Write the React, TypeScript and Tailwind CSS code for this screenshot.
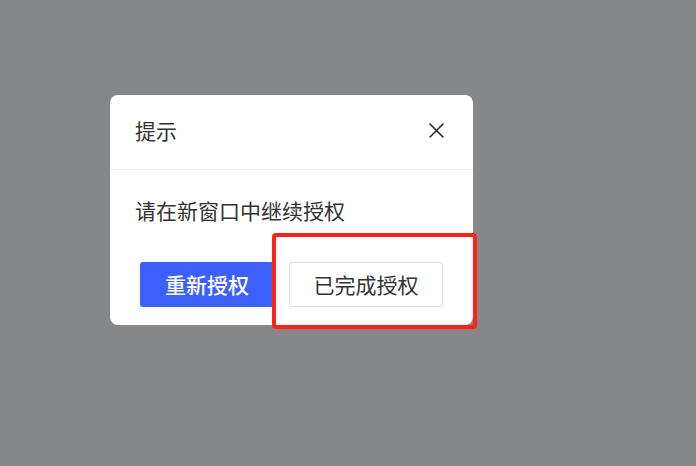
import React from 'react';

const font = { fontFamily: '"Noto Sans CJK SC", "Noto Sans", sans-serif' };

const App: React.FC = () => {
  return (
    <div className="relative w-[696px] h-[466px] bg-[#868789] pl-[110px] pt-[95px]" style={font}>
      <div className="w-[363px] h-[230px] rounded-lg bg-white flex flex-col">
        {/* Header */}
        <div className="h-[75px] shrink-0 px-[25px] flex items-center justify-between border-b border-[#eeeeee]">
          <span className="text-[21px] leading-none text-[#333333] -mt-[3px]">提示</span>
          <button className="w-[20px] h-[20px] flex items-center justify-center mr-[2px] -mt-[3px]" aria-label="关闭">
            <svg width="15" height="15" viewBox="0 0 15 15" fill="none" stroke="#222222" strokeWidth="1.5" strokeLinecap="round">
              <path d="M1 1L14 14M14 1L1 14" />
            </svg>
          </button>
        </div>

        {/* Body */}
        <div className="px-[25px] pt-[27px] text-[21px] leading-[26px] text-[#333333]">请在新窗口中继续授权</div>

        {/* Footer */}
        <div className="mt-[39px] pl-[30px] flex gap-[15px]">
          <button className="w-[134px] h-[45px] rounded-[3px] bg-[#3d5ffb] text-white text-[21px] leading-none font-medium">
            重新授权
          </button>
          <button className="w-[154px] h-[45px] rounded-[3px] bg-white border border-[#dcdcdc] text-[#333333] text-[21px] leading-none">
            已完成授权
          </button>
        </div>
      </div>

      {/* annotation highlight */}
      <div className="absolute left-[272px] top-[233px] w-[205px] h-[96px] border-4 border-[#ff2116] rounded-[4px]" />
    </div>
  );
};

export default App;
